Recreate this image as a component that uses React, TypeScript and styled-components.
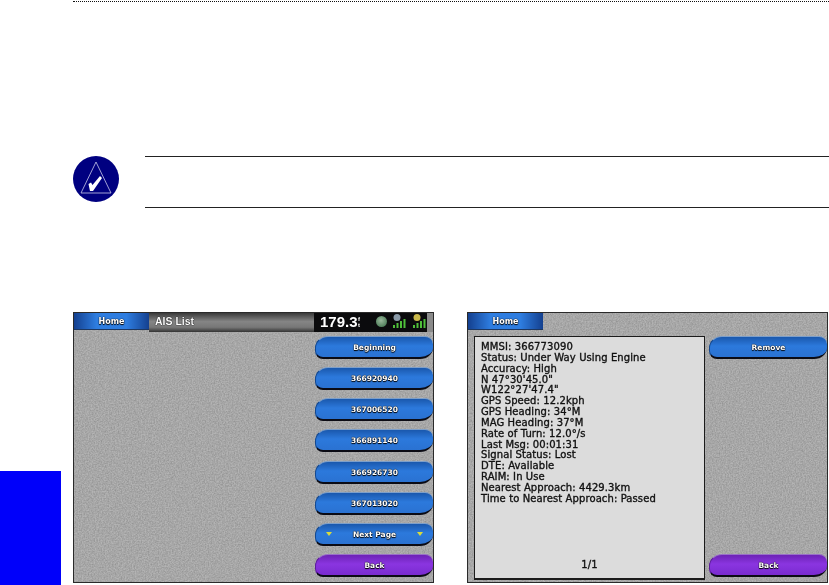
import React from 'react'
import styled, { createGlobalStyle } from 'styled-components'

const NOISE = `url("data:image/svg+xml,%3Csvg xmlns='http://www.w3.org/2000/svg' width='361' height='271'%3E%3Cfilter id='n' color-interpolation-filters='sRGB'%3E%3CfeTurbulence type='fractalNoise' baseFrequency='.7' numOctaves='2' seed='4'/%3E%3CfeColorMatrix values='0 0 0 0 .4 0 0 0 0 .4 0 0 0 0 .4 .7 0 0 0 -.18'/%3E%3C/filter%3E%3Crect width='361' height='271' filter='url(%23n)'/%3E%3C/svg%3E")`

const GlobalStyle = createGlobalStyle`
  html,
  body {
    margin: 0;
    padding: 0;
    background: #fff;
  }
`

const Page = styled.div`
  display: grid;
  grid-template-columns: 61px 1fr;
  width: 829px;
  height: 585px;
  overflow: hidden;
  font-family: 'Liberation Sans', Arial, sans-serif;
`

const SideTab = styled.div`
  align-self: end;
  height: 114px;
  background: #0000fa;
`

const Content = styled.main`
  display: flex;
  flex-direction: column;
  padding-left: 12px;
`

const TopRule = styled.div`
  height: 0;
  margin-top: 1px;
  border-top: 1px dotted #111;
`

const Note = styled.section`
  display: grid;
  grid-template-columns: 46px 1fr;
  column-gap: 26px;
  align-items: start;
  height: 52px;
  margin-top: 154px;
`

const NoteBody = styled.div`
  height: 50px;
  border-top: 1px solid #222;
  border-bottom: 1px solid #222;
`

const Screens = styled.div`
  display: flex;
  gap: 33px;
  margin-top: 104px;
`

const Screen = styled.section`
  display: flex;
  flex-direction: column;
  box-sizing: border-box;
  width: 361px;
  height: 271px;
  border: 1px solid #2a2a2a;
  background: ${NOISE}, #b4b4b4;
  filter: blur(0.3px);
`

const Header = styled.header`
  display: flex;
  height: 19px;
  flex: none;
`

const HomeTab = styled.div`
  display: flex;
  align-items: center;
  justify-content: center;
  box-sizing: border-box;
  width: 75px;
  height: 17px;
  border-bottom: 1px solid #1d3760;
  background: linear-gradient(90deg, #14408f 0%, #2e7de0 30%, #2e7de0 70%, #14408f 100%);
  color: #fff;
  font-family: 'DejaVu Sans', sans-serif;
  font-size: 8px;
  font-weight: 700;
  text-shadow: 0 0 1px #000, 0 0 1px #000, 0 1px 1px #000;
`

const TitleBar = styled.div`
  display: flex;
  align-items: center;
  width: 165px;
  padding: 0 0 3px 6px;
  box-sizing: border-box;
  background: linear-gradient(180deg, #3a3a3a 0%, #858585 45%, #777 75%, #333 100%);
  color: #fff;
  font-size: 10.5px;
  font-weight: 700;
  text-shadow: 0 0 1px #000, 0 0 1px #000;
`

const Status = styled.div`
  display: flex;
  align-items: center;
  flex: 1;
  background: linear-gradient(90deg, #0b0b0d 0 113px, #8a8a8a 113px);
  color: #fff;
  padding: 0 0 2px 6px;
  font-size: 15px;
  font-weight: 700;
  gap: 4px;
`

const Reading = styled.span`
  width: 34px;
  white-space: nowrap;
`

const Unit = styled.span`
  width: 4px;
  font-size: 6px;
  line-height: 6px;
`

const Dot = styled.span`
  width: 11px;
  height: 11px;
  margin-left: 10px;
  border-radius: 50%;
  background: radial-gradient(circle at 45% 40%, #9ab89c, #4f7f5a 75%);
`

const Bars = styled.svg`
  width: 16px;
  height: 16px;
  flex: none;
`

const Body = styled.div`
  display: flex;
  flex: 1;
  min-height: 0;
  justify-content: space-between;
  gap: 4px;
  padding: 4px 0 5px 6px;
`

const Spacer = styled.div`
  flex: 1;
`

const ButtonColumn = styled.div`
  display: flex;
  flex-direction: column;
  justify-content: space-between;
  width: 118px;
  flex: none;
  margin-left: auto;
`

const ColumnGap = styled.div`
  flex: 1;
`

const Button = styled.div<{ $tone?: 'blue' | 'purple' }>`
  display: flex;
  align-items: center;
  justify-content: space-between;
  box-sizing: border-box;
  height: 23px;
  padding: 1px 10px 0;
  flex: none;
  border-radius: 13px 8px 13px 8px / 12px 8px 11px 8px;
  border-top: 1px solid ${p => (p.$tone === 'purple' ? '#9a70c8' : '#7d9fca')};
  border-bottom: 2px solid #0b0b14;
  border-left: 1px solid ${p => (p.$tone === 'purple' ? '#5c1c9c' : '#14488f')};
  background: ${p =>
    p.$tone === 'purple'
      ? 'linear-gradient(180deg, #6d22b6 0%, #8a35e0 45%, #7a2bd0 100%)'
      : 'linear-gradient(180deg, #1a58ad 0%, #2c79dc 45%, #2a72d2 100%)'};
  color: #fff;
  font-family: 'DejaVu Sans', sans-serif;
  font-size: 7.5px;
  font-weight: 700;
  text-shadow: 0 0 1px #000, 0 0 1px #000, 0 1px 1px #000;
`

const Label = styled.span`
  flex: 1;
  text-align: center;
`

const Arrow = styled.span`
  width: 0;
  height: 0;
  border-left: 3px solid transparent;
  border-right: 3px solid transparent;
  border-top: 4px solid #d9dc3c;
`

const DetailPanel = styled.div`
  display: flex;
  flex-direction: column;
  box-sizing: border-box;
  width: 232px;
  height: 244px;
  padding: 5px 6px 0;
  border: 1px solid #1b1b1b;
  border-bottom-width: 2px;
  background: #dcdcdc;
  color: #111;
  font-family: 'DejaVu Sans', sans-serif;
  font-size: 10px;
  letter-spacing: 0.1px;
  -webkit-text-stroke: 0.35px #111;
  line-height: 10.85px;
  white-space: nowrap;
`

const Pager = styled.div`
  margin-top: auto;
  margin-bottom: 7px;
  text-align: center;
`

const DETAILS = [
  'MMSI: 366773090',
  'Status: Under Way Using Engine',
  'Accuracy: High',
  'N  47°30\'45.0"',
  'W122°27\'47.4"',
  'GPS Speed: 12.2kph',
  'GPS Heading: 34°M',
  'MAG Heading: 37°M',
  'Rate of Turn: 12.0°/s',
  'Last Msg: 00:01:31',
  'Signal Status: Lost',
  'DTE: Available',
  'RAIM: In Use',
  'Nearest Approach: 4429.3km',
  'Time to Nearest Approach: Passed'
]

const VESSELS = ['366920940', '367006520', '366891140', '366926730', '367013020']

const NoteIcon = () => (
  <svg width="46" height="46" viewBox="0 0 46 46">
    <circle cx="23" cy="23" r="23" fill="#000080" />
    <path d="M23 6 L38 37 H8 Z" fill="none" stroke="#c9c9ea" strokeWidth="0.8" />
    <path d="M15.5 28 L18 26.5 L19.5 29 L27 20 L29 22 L20 35 L17 35 Z" fill="#fff" />
  </svg>
)

const Signal = ({ head }: { head: string }) => (
  <Bars viewBox="0 0 16 16">
    <circle cx="6" cy="3.5" r="3.5" fill={head} />
    <rect x="2" y="11" width="2" height="3" fill="#4fbf3a" />
    <rect x="5.5" y="9" width="2" height="5" fill="#4fbf3a" />
    <rect x="9" y="7" width="2" height="7" fill="#4fbf3a" />
    <rect x="12.5" y="5" width="2" height="9" fill="#4fbf3a" />
  </Bars>
)

export default function App() {
  return (
    <Page>
      <GlobalStyle />
      <SideTab />
      <Content>
        <TopRule />
        <Note>
          <NoteIcon />
          <NoteBody />
        </Note>
        <Screens>
          <Screen>
            <Header>
              <HomeTab>Home</HomeTab>
              <TitleBar>AIS List</TitleBar>
              <Status>
                <Reading>179.3</Reading>
                <Unit>f t</Unit>
                <Dot />
                <Signal head="#8a9aa8" />
                <Signal head="#c9b84a" />
              </Status>
            </Header>
            <Body>
              <Spacer />
              <ButtonColumn>
                <Button>
                  <Label>Beginning</Label>
                </Button>
                {VESSELS.map(v => (
                  <Button key={v}>
                    <Label>{v}</Label>
                  </Button>
                ))}
                <Button>
                  <Arrow />
                  <Label>Next Page</Label>
                  <Arrow />
                </Button>
                <Button $tone="purple">
                  <Label>Back</Label>
                </Button>
              </ButtonColumn>
            </Body>
          </Screen>
          <Screen>
            <Header>
              <HomeTab>Home</HomeTab>
            </Header>
            <Body>
              <DetailPanel>
                {DETAILS.map(line => (
                  <div key={line}>{line}</div>
                ))}
                <Pager>1/1</Pager>
              </DetailPanel>
              <ButtonColumn>
                <Button>
                  <Label>Remove</Label>
                </Button>
                <ColumnGap />
                <Button $tone="purple">
                  <Label>Back</Label>
                </Button>
              </ButtonColumn>
            </Body>
          </Screen>
        </Screens>
      </Content>
    </Page>
  )
}
